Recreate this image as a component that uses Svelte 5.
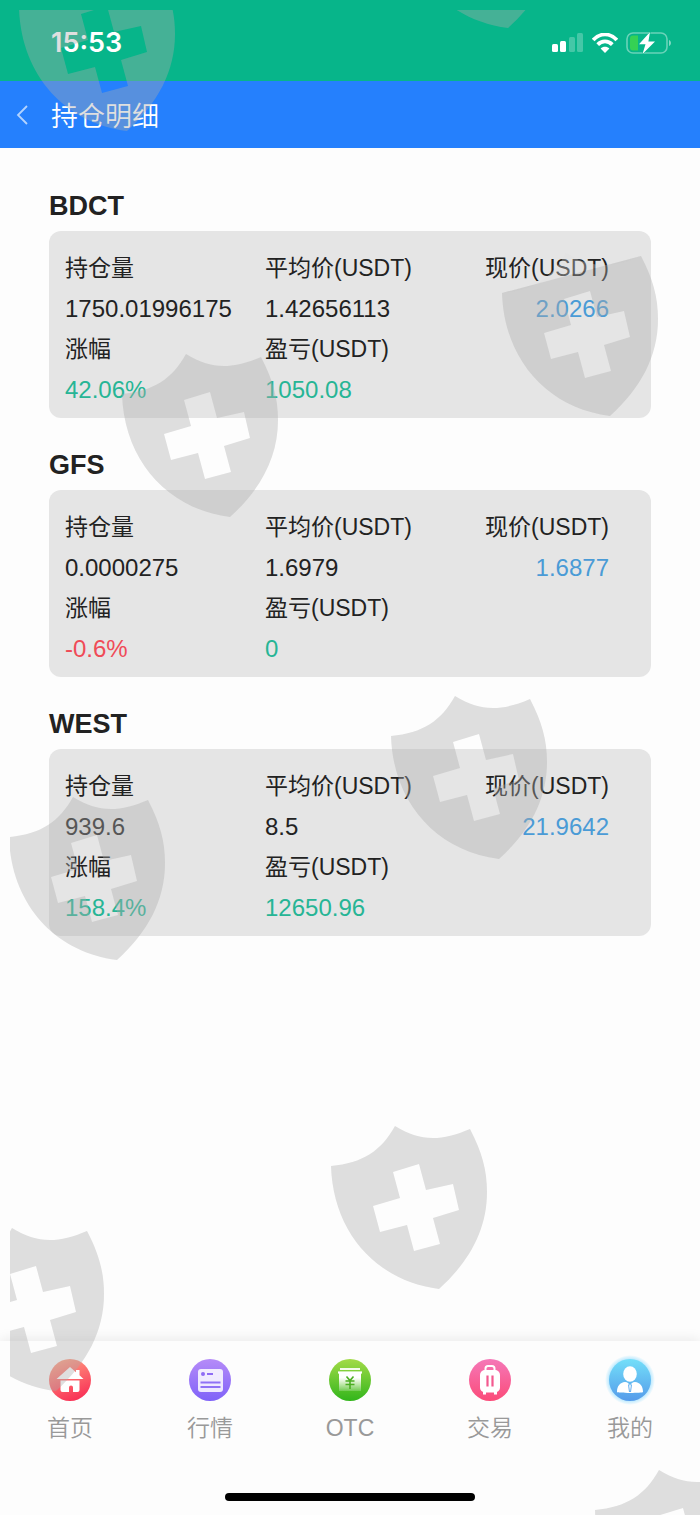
<script>
  const holdings = [
    { name: 'BDCT', amount: '1750.01996175', average: '1.42656113', price: '2.0266', change: '42.06%', profit: '1050.08' },
    { name: 'GFS', amount: '0.0000275', average: '1.6979', price: '1.6877', change: '-0.6%', profit: '0' },
    { name: 'WEST', amount: '939.6', average: '8.5', price: '21.9642', change: '158.4%', profit: '12650.96' }
  ];

  const tabs = [
    { id: 'home', label: '首页' },
    { id: 'market', label: '行情' },
    { id: 'otc', label: 'OTC' },
    { id: 'trade', label: '交易' },
    { id: 'mine', label: '我的' }
  ];

  // Free placement of the watermark shields over the whole screen.
  const shields = [
    { x: 9, y: -42 },
    { x: 390, y: -145 },
    { x: 112, y: 344 },
    { x: 492, y: 243, paleTop: true },
    { x: 381, y: 686 },
    { x: -1, y: 787 },
    { x: 321, y: 1116 },
    { x: -62, y: 1218 },
    { x: 585, y: 1460 }
  ];

  const shoulder = 'M0 40C32 37 50 25 64 0C88 15 109 16 139 3';
  const straight = 'M0 40L139 3';
  const body =
    'C151 26 156 44 156 66C156 103 139 135 108 163C45 155 2 106 0 40Z' +
    'M62 46 69 72 42 80 49 106 76 99 83 125 109 118 102 92 128 84 122 58 95 64 88 38Z';
</script>

<div class="screen">
  <div class="status">
    <span class="time">15:53</span>
    <span class="indicators">
      <svg width="32" height="20" viewBox="0 0 32 20" role="img" aria-label="信号">
        <rect x="0" y="11" width="6" height="8" rx="1.5" fill="#fff" />
        <rect x="8" y="8" width="6" height="11" rx="1.5" fill="#fff" />
        <rect x="17" y="4" width="6" height="15" rx="1.5" fill="#fff" opacity=".25" />
        <rect x="25" y="0" width="6" height="19" rx="1.5" fill="#fff" opacity=".25" />
      </svg>
      <svg width="26" height="20" viewBox="0 0 26 20" role="img" aria-label="无线网络">
        <g fill="none" stroke="#fff" stroke-width="3.8">
          <path d="M1.200 7C8-.4 18-.4 24.800 7" />
          <path d="M5.700 11.600c4.200-4.200 10.400-4.200 14.600 0" />
        </g>
        <path d="M13 20 8.600 15.400c2.400-2.200 6.400-2.200 8.800 0Z" fill="#fff" />
      </svg>
      <svg width="46" height="24" viewBox="0 0 46 24" role="img" aria-label="正在充电">
        <rect x="1" y="2" width="40" height="20" rx="6" fill="none" stroke="#fff" stroke-opacity=".4" stroke-width="1.600" />
        <path d="M43 9c2.600.8 2.600 5.200 0 6Z" fill="#fff" opacity=".5" />
        <path d="M7 4.500h5v15H7a3 3 0 0 1-3-3v-9a3 3 0 0 1 3-3Z" fill="#35d154" />
        <path d="M24 1 13 13.200h6.500L16.500 23 29 10.500h-6.600Z" fill="#fff" stroke="#07b58a" stroke-width="1" paint-order="stroke" />
      </svg>
    </span>
  </div>

  <header>
    <button class="back" type="button" aria-label="返回">
      <svg width="12" height="20" viewBox="0 0 12 20"><path d="M11 1 2 10l9 9" fill="none" stroke="#fff" stroke-opacity=".65" stroke-width="1.800" /></svg>
    </button>
    <h1>持仓明细</h1>
  </header>

  <main>
    {#each holdings as h}
      <section>
        <h2>{h.name}</h2>
        <dl>
          <div><dt>持仓量</dt><dd>{h.amount}</dd></div>
          <div><dt>平均价(USDT)</dt><dd>{h.average}</dd></div>
          <div class="end"><dt>现价(USDT)</dt><dd class="price">{h.price}</dd></div>
          <div><dt>涨幅</dt><dd class={h.change.startsWith('-') ? 'down' : 'up'}>{h.change}</dd></div>
          <div><dt>盈亏(USDT)</dt><dd class="up">{h.profit}</dd></div>
        </dl>
      </section>
    {/each}
  </main>

  <footer>
    <nav>
      {#each tabs as tab}
        <a href="#{tab.id}">
          <svg width="50" height="50" viewBox="0 0 50 50" aria-hidden="true">
            {#if tab.id === 'home'}
              <defs><linearGradient id="g-home" x1="0.2" y1="0" x2="0.6" y2="1"><stop stop-color="#ffa183" /><stop offset="1" stop-color="#f93156" /></linearGradient></defs>
              <circle cx="25" cy="25" r="21" fill="url(#g-home)" />
              <path d="M25 12 11.500 24h27l-4-3.700V15h-3.500v2.200Z" fill="#fff" />
              <path d="M15.500 25.500h19V35a2 2 0 0 1-2 2H28v-4.500a2 2 0 0 0-4 0V37h-6.500a2 2 0 0 1-2-2Z" fill="#fff" />
            {:else if tab.id === 'market'}
              <defs><linearGradient id="g-market" x1="0.5" y1="0" x2="0.5" y2="1"><stop stop-color="#b58bf8" /><stop offset="1" stop-color="#7f62f8" /></linearGradient></defs>
              <circle cx="25" cy="25" r="21" fill="url(#g-market)" />
              <rect x="13" y="14" width="25" height="23" rx="3" fill="#fff" opacity=".85" />
              <circle cx="18" cy="19" r="2" fill="#8f6cf5" />
              <path d="M22 19h6" stroke="#8f6cf5" stroke-width="2" />
              <path d="M15.500 27.500h20M15.500 32h20" stroke="#8f72f5" stroke-width="2.200" />
            {:else if tab.id === 'otc'}
              <defs>
                <linearGradient id="g-otc" x1="0.5" y1="0" x2="0.5" y2="1"><stop stop-color="#a2db48" /><stop offset="1" stop-color="#32b51b" /></linearGradient>
                <linearGradient id="g-note" x1="0" y1="0" x2="0" y2="1"><stop offset=".3" stop-color="#fff" /><stop offset="1" stop-color="#fff" stop-opacity=".2" /></linearGradient>
              </defs>
              <circle cx="25" cy="25" r="21" fill="url(#g-otc)" />
              <path d="M15 14h20" stroke="#fff" stroke-width="1.800" />
              <path d="M13 17.500h24" stroke="#fff" stroke-width="2.200" />
              <path d="M14 17h22v19H14Z" fill="url(#g-note)" />
              <path d="M21.500 21.500 25 25.500l3.500-4M20.500 26h9M20.500 29.500h9M25 25.500V34" fill="none" stroke="#4cae22" stroke-width="1.600" />
            {:else if tab.id === 'trade'}
              <defs><linearGradient id="g-trade" x1="0.5" y1="0" x2="0.5" y2="1"><stop stop-color="#f578b8" /><stop offset="1" stop-color="#fb4b79" /></linearGradient></defs>
              <circle cx="25" cy="25" r="21" fill="url(#g-trade)" />
              <path d="M20.500 17v-3.500a2.500 2.500 0 0 1 2.500-2.500h4a2.500 2.500 0 0 1 2.500 2.500V17" fill="none" stroke="#fff" stroke-width="2" />
              <rect x="15" y="15" width="20" height="22.500" rx="5" fill="#fff" />
              <path d="M19.500 36v3.500M30.500 36v3.500" stroke="#fff" stroke-width="3" />
              <path d="M22.500 20.500v11M27.500 20.500v11" stroke="#f3598f" stroke-width="2.200" />
            {:else}
              <defs>
                <linearGradient id="g-mine" x1="0.5" y1="0" x2="0.5" y2="1"><stop stop-color="#73dff9" /><stop offset="1" stop-color="#559bea" /></linearGradient>
                <radialGradient id="g-glow"><stop offset=".78" stop-color="#83d8ff" stop-opacity=".7" /><stop offset="1" stop-color="#83d8ff" stop-opacity="0" /></radialGradient>
              </defs>
              <circle cx="25" cy="25" r="25" fill="url(#g-glow)" />
              <circle cx="25" cy="25" r="21" fill="url(#g-mine)" />
              <ellipse cx="25" cy="19" rx="6.800" ry="7.800" fill="#fff" />
              <path d="M12 37c0-6 3-9.500 8-10 2.500 0 4.500 2 5 4 .5-2 2.500-4 5-4 5 .5 8 4 8 10 0 1.200-26 1.200-26 0Z" fill="#fff" />
              <path d="M23.500 29.500 24.500 37M26.500 29.500 25.500 37" stroke="#62aef0" stroke-width="1" />
            {/if}
          </svg>
          <span>{tab.label}</span>
        </a>
      {/each}
    </nav>
    <div class="grip"></div>
  </footer>

  <div class="watermark" aria-hidden="true">
    {#each shields as s}
      <svg width="157" height="164" viewBox="0 0 157 164" style="left: {s.x}px; top: {s.y}px">
        {#if s.paleTop}
          <path class="pale" d="{shoulder}Z" />
        {/if}
        <path fill-rule="evenodd" d={(s.paleTop ? straight : shoulder) + body} />
      </svg>
    {/each}
  </div>
</div>

<style>
  :global(body) {
    margin: 0;
    background: #fdfdfd;
  }

  .screen {
    position: relative;
    display: flex;
    flex-direction: column;
    min-height: 100vh;
    overflow: hidden;
    color: #222;
    font-family: 'Liberation Sans', 'Noto Sans CJK SC', sans-serif;
  }

  .status {
    display: flex;
    align-items: center;
    justify-content: space-between;
    box-sizing: border-box;
    height: 81px;
    padding: 4px 28px 0 51px;
    background: #07b58a;
    color: #fff;
  }

  .time {
    font: 600 27px/32px Inter, sans-serif;
  }

  .indicators {
    display: flex;
    align-items: center;
    gap: 8px;
  }

  header {
    display: flex;
    align-items: center;
    height: 67px;
    background: #2580fd;
    color: #fff;
  }

  .back {
    display: flex;
    align-items: center;
    width: 51px;
    height: 67px;
    padding: 0 16px;
    border: 0;
    background: none;
  }

  h1 {
    margin: 0;
    padding-top: 4px;
    font-size: 27px;
    font-weight: 350;
    line-height: 40px;
  }

  main {
    flex: 1;
    padding: 35px 7% 24px;
  }

  section {
    margin-bottom: 24px;
  }

  h2 {
    margin: 0;
    padding: 3px 0 5px;
    font-size: 27px;
    line-height: 40px;
  }

  dl {
    display: grid;
    grid-template-columns: 25fr 25fr 18fr;
    margin: 0;
    padding: 17px 42px 8px 16px;
    border-radius: 12px;
    background: #e5e5e5;
  }

  dt {
    font-size: 23px;
    line-height: 41px;
    white-space: nowrap;
  }

  dd {
    margin: 0;
    font-size: 24px;
    line-height: 40px;
  }

  .end {
    justify-self: end;
    text-align: right;
  }

  .price {
    color: #4a9bd6;
  }

  .up {
    color: #27b595;
  }

  .down {
    color: #f04b57;
  }

  footer {
    display: flex;
    flex-direction: column;
    justify-content: space-between;
    box-sizing: border-box;
    height: 174px;
    padding: 14px 0;
    background: #fdfdfd;
    box-shadow: 0 -2px 12px rgba(0, 0, 0, 0.08);
  }

  nav {
    display: grid;
    grid-template-columns: repeat(5, 1fr);
  }

  nav a {
    display: flex;
    flex-direction: column;
    align-items: center;
    color: #999;
    font-size: 23px;
    font-weight: 350;
    line-height: 46px;
    text-decoration: none;
  }

  .grip {
    align-self: center;
    width: 250px;
    height: 8px;
    border-radius: 4px;
    background: #000;
  }

  .watermark {
    position: absolute;
    inset: 10px 0 0 10px;
    overflow: hidden;
    pointer-events: none;
  }

  .watermark svg {
    position: absolute;
    fill: rgba(171, 171, 171, 0.38);
  }

  .watermark .pale {
    fill: rgba(224, 224, 224, 0.35);
  }
</style>
